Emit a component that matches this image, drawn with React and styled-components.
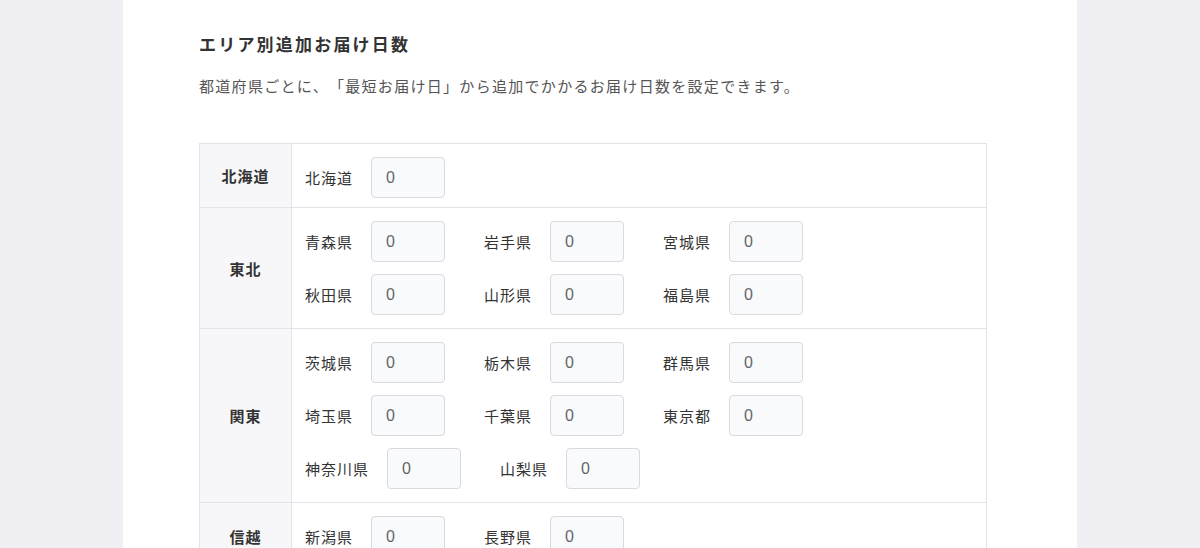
import React from "react";
import styled, { createGlobalStyle } from "styled-components";

const GlobalStyle = createGlobalStyle`
  body {
    margin: 0;
    background-color: #efeff4;
    font-family: "Noto Sans CJK JP", "Noto Sans", sans-serif;
    color: #333;
    text-spacing-trim: space-all;
  }
`;

const Page = styled.div`
  width: 954px;
  min-height: 100vh;
  margin: 0 auto;
  background-color: #fff;
  padding: 32px 0 40px 76px;
  box-sizing: border-box;
`;

const Title = styled.h2`
  margin: 0;
  font-size: 17px;
  line-height: 24px;
  font-weight: 700;
  letter-spacing: 2.2px;
  color: #333;
`;

const Description = styled.p`
  margin: 19px 0 46px;
  font-size: 15px;
  line-height: 22px;
  letter-spacing: 1.3px;
  color: #555;
`;

const Table = styled.div`
  width: 788px;
  border: 1px solid #e3e3e9;
  box-sizing: border-box;
`;

const Row = styled.div`
  display: flex;
  & + & {
    border-top: 1px solid #e3e3e9;
  }
`;

const AreaHead = styled.div`
  width: 91px;
  flex: none;
  display: flex;
  align-items: center;
  justify-content: center;
  background-color: #f7f7f9;
  border-right: 1px solid #e3e3e9;
  font-size: 15px;
  font-weight: 700;
  letter-spacing: 1px;
  color: #333;
`;

const Cell = styled.div`
  flex: 1;
  display: flex;
  flex-wrap: wrap;
  gap: 12px 39px;
  padding: 13px 30px ${(p) => (p.$compact ? 9 : 13)}px 13px;
`;

const Item = styled.label`
  display: flex;
  align-items: center;
`;

const PrefName = styled.span`
  font-size: 15px;
  letter-spacing: 1px;
  color: #333;
  margin-right: 18px;
`;

const DaysInput = styled.input`
  width: 74px;
  height: 41px;
  box-sizing: border-box;
  border: 1px solid #d9d9df;
  border-radius: 4px;
  background-color: #f9fafc;
  padding: 0 14px;
  font-family: "Liberation Sans", "Noto Sans", sans-serif;
  font-size: 16px;
  color: #666;
  outline: none;
`;

const areas = [
  { name: "北海道", prefs: ["北海道"], compact: true },
  { name: "東北", prefs: ["青森県", "岩手県", "宮城県", "秋田県", "山形県", "福島県"] },
  {
    name: "関東",
    prefs: ["茨城県", "栃木県", "群馬県", "埼玉県", "千葉県", "東京都", "神奈川県", "山梨県"],
  },
  { name: "信越", prefs: ["新潟県", "長野県"] },
  { name: "北陸", prefs: ["富山県", "石川県", "福井県"] },
];

const App = () => {
  return (
    <>
      <GlobalStyle />
      <Page>
        <Title>エリア別追加お届け日数</Title>
        <Description>
          都道府県ごとに、「最短お届け日」から追加でかかるお届け日数を設定できます。
        </Description>
        <Table>
          {areas.map((area) => (
            <Row key={area.name}>
              <AreaHead>{area.name}</AreaHead>
              <Cell $compact={area.compact}>
                {area.prefs.map((pref) => (
                  <Item key={pref}>
                    <PrefName>{pref}</PrefName>
                    <DaysInput type="text" defaultValue="0" />
                  </Item>
                ))}
              </Cell>
            </Row>
          ))}
        </Table>
      </Page>
    </>
  );
};

export default App;
